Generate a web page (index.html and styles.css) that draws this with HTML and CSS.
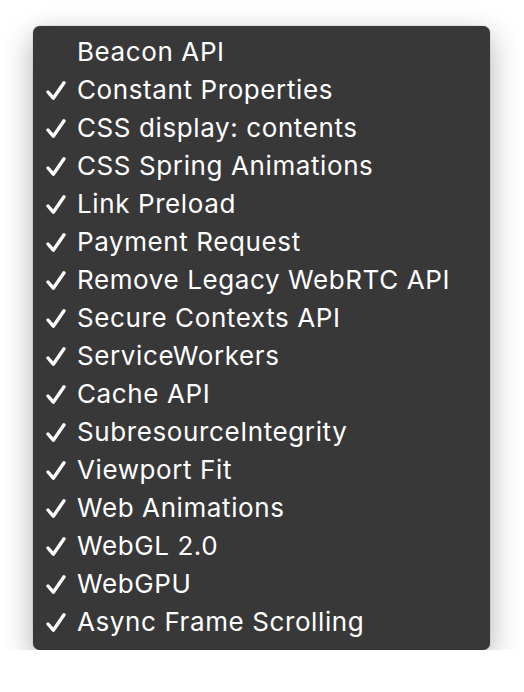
FILE: index.html
```html
<!DOCTYPE html>
<html>
<head>
<meta charset="utf-8">
<link rel="stylesheet" href="styles.css">
</head>
<body>
<div class="menu">
  <div class="item"><span class="check"></span><span class="label">Beacon API</span></div>
  <div class="item"><span class="check"><svg viewBox="0 0 20 19"><path d="M2 11 L7.3 17.2 L18 1.8"/></svg></span><span class="label">Constant Properties</span></div>
  <div class="item"><span class="check"><svg viewBox="0 0 20 19"><path d="M2 11 L7.3 17.2 L18 1.8"/></svg></span><span class="label">CSS display: contents</span></div>
  <div class="item"><span class="check"><svg viewBox="0 0 20 19"><path d="M2 11 L7.3 17.2 L18 1.8"/></svg></span><span class="label">CSS Spring Animations</span></div>
  <div class="item"><span class="check"><svg viewBox="0 0 20 19"><path d="M2 11 L7.3 17.2 L18 1.8"/></svg></span><span class="label">Link Preload</span></div>
  <div class="item"><span class="check"><svg viewBox="0 0 20 19"><path d="M2 11 L7.3 17.2 L18 1.8"/></svg></span><span class="label">Payment Request</span></div>
  <div class="item"><span class="check"><svg viewBox="0 0 20 19"><path d="M2 11 L7.3 17.2 L18 1.8"/></svg></span><span class="label">Remove Legacy WebRTC API</span></div>
  <div class="item"><span class="check"><svg viewBox="0 0 20 19"><path d="M2 11 L7.3 17.2 L18 1.8"/></svg></span><span class="label">Secure Contexts API</span></div>
  <div class="item"><span class="check"><svg viewBox="0 0 20 19"><path d="M2 11 L7.3 17.2 L18 1.8"/></svg></span><span class="label">ServiceWorkers</span></div>
  <div class="item"><span class="check"><svg viewBox="0 0 20 19"><path d="M2 11 L7.3 17.2 L18 1.8"/></svg></span><span class="label">Cache API</span></div>
  <div class="item"><span class="check"><svg viewBox="0 0 20 19"><path d="M2 11 L7.3 17.2 L18 1.8"/></svg></span><span class="label">SubresourceIntegrity</span></div>
  <div class="item"><span class="check"><svg viewBox="0 0 20 19"><path d="M2 11 L7.3 17.2 L18 1.8"/></svg></span><span class="label">Viewport Fit</span></div>
  <div class="item"><span class="check"><svg viewBox="0 0 20 19"><path d="M2 11 L7.3 17.2 L18 1.8"/></svg></span><span class="label">Web Animations</span></div>
  <div class="item"><span class="check"><svg viewBox="0 0 20 19"><path d="M2 11 L7.3 17.2 L18 1.8"/></svg></span><span class="label">WebGL 2.0</span></div>
  <div class="item"><span class="check"><svg viewBox="0 0 20 19"><path d="M2 11 L7.3 17.2 L18 1.8"/></svg></span><span class="label">WebGPU</span></div>
  <div class="item"><span class="check"><svg viewBox="0 0 20 19"><path d="M2 11 L7.3 17.2 L18 1.8"/></svg></span><span class="label">Async Frame Scrolling</span></div>
</div>
</body>
</html>
```
FILE: styles.css
```css
html, body {
  margin: 0;
  padding: 0;
  background: #ffffff;
}
body {
  padding: 26px 0 0 33px;
}
.menu {
  width: 457px;
  height: 624px;
  box-sizing: border-box;
  padding: 7px 0 9px 0;
  background: #383838;
  border-radius: 7px;
  box-shadow: 0 10px 30px rgba(0, 0, 0, 0.32), 0 0 1px rgba(0, 0, 0, 0.5);
  font-family: Inter, "Liberation Sans", sans-serif;
  font-size: 26px;
  letter-spacing: 0.6px;
  color: #ffffff;
}
.item {
  display: flex;
  align-items: center;
  height: 38px;
  padding-left: 13px;
}
.check {
  width: 20px;
  height: 19px;
  margin-right: 11px;
  margin-top: 1px;
  flex: none;
}
.check svg {
  display: block;
  width: 20px;
  height: 19px;
  fill: none;
  stroke: #ffffff;
  stroke-width: 3.4;
  stroke-linecap: round;
  stroke-linejoin: round;
}
.label {
  white-space: nowrap;
  line-height: 38px;
}
```
